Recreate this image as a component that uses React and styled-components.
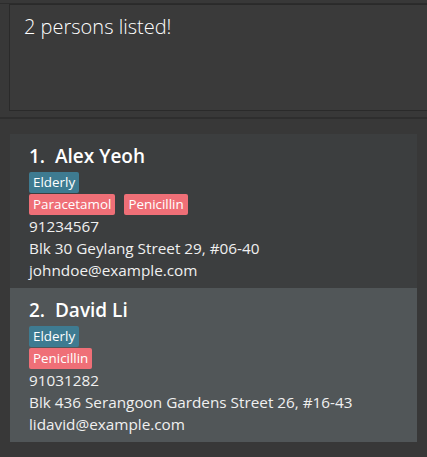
import React from "react";
import styled, { createGlobalStyle } from "styled-components";

const GlobalStyle = createGlobalStyle`
  html, body {
    margin: 0;
    padding: 0;
    background: #383838;
  }
  body {
    font-family: "Open Sans", "Noto Sans", sans-serif;
    color: #ffffff;
  }
`;

const Page = styled.div`
  width: 427px;
  height: 457px;
  overflow: hidden;
  display: flex;
  flex-direction: column;
  background: #383838;
`;

const ResultPane = styled.div`
  border-top: 1px solid #2c2c2c;
  margin-top: 3px;
  padding: 0 0 6px 9px;
  border-bottom: 2px solid #2e2e2e;
`;

const ResultBox = styled.div`
  height: 107px;
  box-sizing: border-box;
  border: 1px solid #2a2a2a;
  border-right: none;
  background: #3a3a3a;
  padding: 8px 14px;
  font-family: "Open Sans", sans-serif;
  font-weight: 300;
  font-size: 20px;
  color: #ffffff;
`;

const ListPane = styled.div`
  flex: 1;
  padding: 15px 10px 0 10px;
  display: flex;
  flex-direction: column;
`;

const Card = styled.div`
  background: ${(p) => (p.odd ? "#515658" : "#3c3e3f")};
  padding: 9px 19px 7px 19px;
  display: flex;
  flex-direction: column;
`;

const Name = styled.div`
  font-family: "Open Sans", sans-serif;
  font-weight: 600;
  font-size: 19px;
  line-height: 26px;
  color: #ffffff;
  margin-bottom: 3px;
  white-space: pre;
`;

const TagRow = styled.div`
  display: flex;
  gap: 9px;
  margin-bottom: ${(p) => (p.last ? "0" : "1px")};
`;

const Tag = styled.span`
  background: ${(p) => (p.kind === "allergy" ? "#ef6f77" : "#3e7b91")};
  color: #ffffff;
  font-size: 13.4px;
  line-height: 21px;
  padding: 0 4px;
  border-radius: 2px;
`;

const Detail = styled.div`
  font-size: 15.3px;
  line-height: 22px;
  color: #f0f0f0;
  white-space: nowrap;
`;

const persons = [
  {
    name: "Alex Yeoh",
    tags: ["Elderly"],
    allergies: ["Paracetamol", "Penicillin"],
    phone: "91234567",
    address: "Blk 30 Geylang Street 29, #06-40",
    email: "johndoe@example.com",
  },
  {
    name: "David Li",
    tags: ["Elderly"],
    allergies: ["Penicillin"],
    phone: "91031282",
    address: "Blk 436 Serangoon Gardens Street 26, #16-43",
    email: "lidavid@example.com",
  },
];

export default function App() {
  return (
    <Page>
      <GlobalStyle />
      <ResultPane>
        <ResultBox>2 persons listed!</ResultBox>
      </ResultPane>
      <ListPane>
        {persons.map((p, i) => (
          <Card key={p.name} odd={i % 2 === 1}>
            <Name>{`${i + 1}.  ${p.name}`}</Name>
            <TagRow>
              {p.tags.map((t) => (
                <Tag key={t}>{t}</Tag>
              ))}
            </TagRow>
            <TagRow last>
              {p.allergies.map((a) => (
                <Tag key={a} kind="allergy">
                  {a}
                </Tag>
              ))}
            </TagRow>
            <Detail>{p.phone}</Detail>
            <Detail>{p.address}</Detail>
            <Detail>{p.email}</Detail>
          </Card>
        ))}
      </ListPane>
    </Page>
  );
}
